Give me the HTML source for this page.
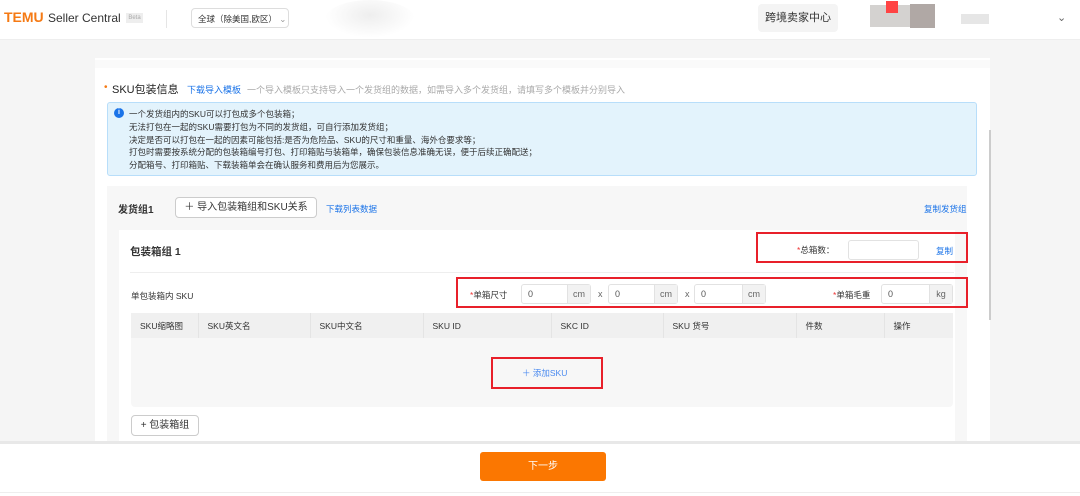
<!DOCTYPE html>
<html><head><meta charset="utf-8"><style>
*{box-sizing:border-box;margin:0;padding:0}
body{width:1080px;height:496px;overflow:hidden;background:#f5f5f5;font-family:"Liberation Sans","Noto Sans CJK SC",sans-serif;font-size:9px;color:#333;position:relative}
.a{position:absolute;white-space:nowrap}
.blue{color:#1a73e8}
.inp{position:absolute;height:20px;border:1px solid #e2e2e2;border-radius:3px;background:#fff;font-size:9px;color:#555;padding:4px 6px}
.suf{position:absolute;top:0;right:0;height:18px;width:23px;background:#f2f2f2;border-left:1px solid #e2e2e2;text-align:center;line-height:18px;color:#666}
.red{position:absolute;border:2px solid #e8202a}
th{font-weight:normal;text-align:left;padding-left:9px;border-right:1px solid #e4e4e4;font-size:8.5px;color:#333}
</style></head><body>
<div class="a" style="left:0;top:0;width:1080px;height:40px;background:#fff;border-bottom:1px solid #eee"></div>
<div class="a" style="left:4px;top:9px;font-size:14px;font-weight:bold;color:#f57a14">TEMU</div>
<div class="a" style="left:48px;top:11px;font-size:12px;color:#333">Seller Central</div>
<div class="a" style="left:126px;top:13px;width:17px;height:10px;background:#eee;font-size:6px;color:#aaa;text-align:center;line-height:10px">Beta</div>
<div class="a" style="left:166px;top:10px;width:1px;height:18px;background:#e5e5e5"></div>
<div class="a" style="left:191px;top:8px;width:98px;height:20px;border:1px solid #ddd;border-radius:4px;padding:4px 6px;font-size:8.5px">全球（除美国,欧区） <span style="color:#999">⌄</span></div>
<div class="a" style="left:325px;top:0;width:90px;height:38px;border-radius:50%;background:radial-gradient(ellipse at 50% 40%,#eee,#fff 70%)"></div>
<div class="a" style="left:758px;top:4px;width:80px;height:28px;background:#f4f4f4;border-radius:4px;font-size:11px;text-align:center;line-height:28px">跨境卖家中心</div>
<div class="a" style="left:870px;top:5px;width:40px;height:22px;background:#d4d2d0"></div>
<div class="a" style="left:886px;top:1px;width:12px;height:12px;background:#f44"></div>
<div class="a" style="left:910px;top:4px;width:25px;height:24px;background:#b0a8a5"></div>
<div class="a" style="left:961px;top:14px;width:28px;height:10px;background:#e6e6e6"></div>
<div class="a" style="left:1057px;top:11px;color:#666;font-size:11px">⌄</div>
<div class="a" style="left:95px;top:58px;width:895px;height:384px;background:#fff"></div>
<div class="a" style="left:95px;top:60px;width:895px;height:8px;background:#fafafa"></div>
<div class="a" style="left:989px;top:130px;width:2px;height:190px;background:#ccc"></div>
<div class="a" style="left:104px;top:82px;color:#f57a14;font-size:10px">•</div>
<div class="a" style="left:112px;top:81px;font-size:11px;color:#222">SKU包装信息</div>
<div class="a blue" style="left:187px;top:83px">下载导入模板</div>
<div class="a" style="left:247px;top:83px;color:#aaa">一个导入模板只支持导入一个发货组的数据，如需导入多个发货组，请填写多个模板并分别导入</div>
<div class="a" style="left:107px;top:102px;width:870px;height:74px;background:#e3f3fc;border:1px solid #b8defa;border-radius:3px"></div>
<div class="a" style="left:114px;top:108px;width:10px;height:10px;border-radius:50%;background:#1a73e8;color:#fff;font-size:7px;text-align:center;line-height:10px;font-weight:bold">i</div>
<div class="a" style="left:129px;top:108px;font-size:8.5px;line-height:12.8px;color:#333">一个发货组内的SKU可以打包成多个包装箱；<br>无法打包在一起的SKU需要打包为不同的发货组，可自行添加发货组；<br>决定是否可以打包在一起的因素可能包括:是否为危险品、SKU的尺寸和重量、海外仓要求等；<br>打包时需要按系统分配的包装箱编号打包、打印箱贴与装箱单，确保包装信息准确无误，便于后续正确配送；<br>分配箱号、打印箱贴、下载装箱单会在确认服务和费用后为您展示。</div>
<div class="a" style="left:107px;top:186px;width:860px;height:256px;background:#f7f7f7"></div>
<div class="a" style="left:118px;top:201px;font-size:10px;font-weight:bold;color:#333">发货组1</div>
<div class="a" style="left:175px;top:197px;width:142px;height:21px;border:1px solid #ccc;border-radius:4px;background:#fff;font-size:10px;text-align:center;line-height:19px">＋ 导入包装箱组和SKU关系</div>
<div class="a blue" style="left:326px;top:203px;font-size:8.5px">下载列表数据</div>
<div class="a blue" style="left:924px;top:203px;font-size:8.5px">复制发货组</div>
<div class="a" style="left:119px;top:230px;width:836px;height:212px;background:#fff"></div>
<div class="a" style="left:130px;top:244px;font-size:10.5px;font-weight:bold;color:#333">包装箱组 1</div>
<div class="a" style="left:130px;top:272px;width:824px;height:1px;background:#eee"></div>
<div class="red" style="left:756px;top:232px;width:212px;height:31px"></div>
<div class="a" style="left:797px;top:244px;font-size:8.5px"><span style="color:#e33">*</span>总箱数：</div>
<div class="inp" style="left:848px;top:240px;width:71px"></div>
<div class="a blue" style="left:936px;top:245px;font-size:8.5px">复制</div>
<div class="a" style="left:131px;top:290px;font-size:8.5px">单包装箱内 SKU</div>
<div class="red" style="left:456px;top:277px;width:512px;height:31px"></div>
<div class="a" style="left:470px;top:289px;font-size:8.5px"><span style="color:#e33">*</span>单箱尺寸</div>
<div class="inp" style="left:521px;top:284px;width:70px">0<div class="suf">cm</div></div>
<div class="a" style="left:598px;top:289px;color:#666">x</div>
<div class="inp" style="left:608px;top:284px;width:70px">0<div class="suf">cm</div></div>
<div class="a" style="left:685px;top:289px;color:#666">x</div>
<div class="inp" style="left:694px;top:284px;width:72px">0<div class="suf">cm</div></div>
<div class="a" style="left:833px;top:289px;font-size:8.5px"><span style="color:#e33">*</span>单箱毛重</div>
<div class="inp" style="left:881px;top:284px;width:72px">0<div class="suf">kg</div></div>
<table class="a" style="left:131px;top:313px;width:822px;height:25px;background:#f0f0f0;border-collapse:collapse;table-layout:fixed"><tr>
<th style="width:67px">SKU缩略图</th><th style="width:112px">SKU英文名</th><th style="width:113px">SKU中文名</th><th style="width:128px">SKU ID</th><th style="width:112px">SKC ID</th><th style="width:133px">SKU 货号</th><th style="width:88px">件数</th><th style="border:0">操作</th></tr></table>
<div class="a" style="left:131px;top:338px;width:822px;height:69px;background:#f7f7f7;border-radius:0 0 4px 4px"></div>
<div class="red" style="left:491px;top:357px;width:112px;height:32px"></div>
<div class="a blue" style="left:522px;top:367px;font-size:8.5px;color:#4a8af0">＋ 添加SKU</div>
<div class="a" style="left:131px;top:415px;width:68px;height:21px;border:1px solid #ccc;border-radius:4px;background:#fff;font-size:10px;text-align:center;line-height:19px">+ 包装箱组</div>
<div class="a" style="left:0;top:441px;width:1080px;height:3px;background:#e8e8e8"></div>
<div class="a" style="left:0;top:444px;width:1080px;height:52px;background:#fff"></div>
<div class="a" style="left:480px;top:452px;width:126px;height:29px;background:#fb7701;border-radius:3px;color:#fff;font-size:10px;text-align:center;line-height:29px">下一步</div>
<div class="a" style="left:0;top:492px;width:1080px;height:1px;background:#eee"></div>
</body></html>
